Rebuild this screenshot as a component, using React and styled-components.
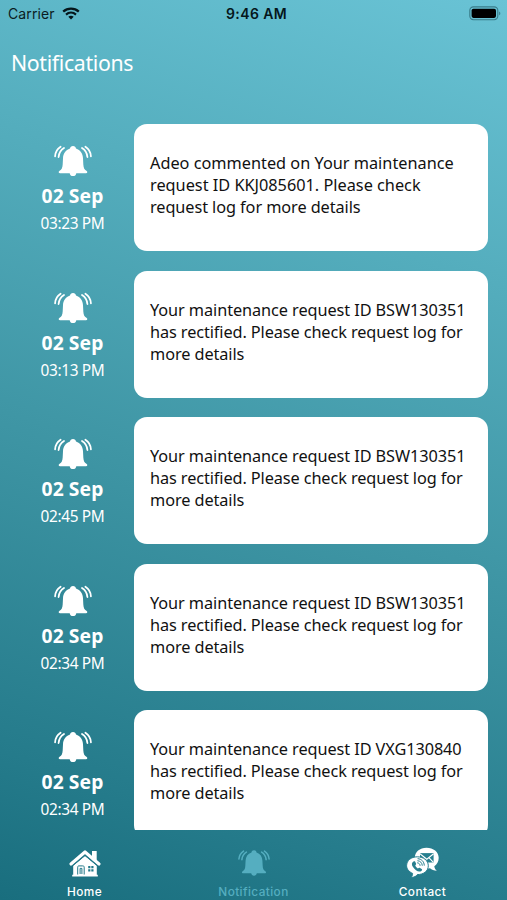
import React from 'react';
import styled, { createGlobalStyle } from 'styled-components';

const GlobalStyle = createGlobalStyle`
  * {
    box-sizing: border-box;
  }

  body {
    margin: 0;
  }
`;

const Screen = styled.div`
  display: flex;
  flex-direction: column;
  width: 507px;
  height: 900px;
  overflow: hidden;
  font-family: 'Noto Sans', 'Open Sans', sans-serif;
  color: #fff;
  background: linear-gradient(
    18deg,
    #196e7e 0%,
    #257b8b 14%,
    #3f96a5 46%,
    #54adbd 73%,
    #69c3d5 100%
  );
`;

const StatusBar = styled.header`
  display: grid;
  grid-template-columns: 1fr auto 1fr;
  align-items: center;
  height: 27px;
  padding: 0 6px 0 8px;
  font-family: Inter, 'Liberation Sans', sans-serif;
  font-size: 14px;
  line-height: 27px;
  color: #0b1c22;
`;

const Carrier = styled.div`
  display: flex;
  align-items: center;
  gap: 7px;
  letter-spacing: 0.1px;
`;

const Clock = styled.div`
  padding-left: 4px;
  font-weight: 600;
  letter-spacing: 0.4px;
  color: #05161b;
`;

const BatterySlot = styled.div`
  display: flex;
  justify-content: flex-end;
`;

const Title = styled.h1`
  height: 97px;
  margin: 0;
  padding: 20px 11px 0;
  font-size: 21.3px;
  font-weight: 400;
  line-height: 32px;
  letter-spacing: -0.35px;
`;

const List = styled.main`
  display: flex;
  flex-direction: column;
  gap: 19.3px;
  height: 706px;
  padding-right: 19.5px;
  overflow: hidden;
`;

const Row = styled.article`
  display: flex;
  flex: none;
  height: 127.3px;
`;

const Stamp = styled.div`
  display: flex;
  flex-direction: column;
  align-items: center;
  width: 134px;
  padding: 21px 0 0 11px;

  svg {
    flex: none;
  }
`;

const Day = styled.div`
  margin-top: 5px;
  font-size: 19.3px;
  font-weight: 700;
  line-height: 28px;
  letter-spacing: 0.1px;
`;

const Time = styled.div`
  margin-top: 1px;
  font-size: 15.4px;
  line-height: 25px;
  letter-spacing: -0.35px;
  white-space: nowrap;
`;

const Card = styled.div`
  flex: 1;
  padding: 28px 0 0 16px;
  border-radius: 13px;
  background: #fff;
  color: #111;
  font-size: 16.3px;
  line-height: 22px;
`;

const Line = styled.div`
  white-space: nowrap;
  letter-spacing: ${props => props.$spacing};
`;

const TabBar = styled.nav`
  display: grid;
  grid-template-columns: repeat(3, 1fr);
  height: 70px;
`;

const Tab = styled.a`
  display: flex;
  flex-direction: column;
  align-items: center;
  padding-top: 16px;
  font-family: Inter, 'Liberation Sans', sans-serif;
  font-size: 11.8px;
  font-weight: 500;
  line-height: 16px;
  letter-spacing: 0.42px;
  color: ${props => (props.$active ? '#55aec0' : '#fff')};

  svg {
    margin-bottom: 4px;
  }
`;

const WifiIcon = () => (
  <svg width="18" height="13" viewBox="0 0 18 13" fill="none" stroke="#05161b">
    <path d="M1.2 4.6C5.6.6 12.4.6 16.8 4.6" strokeWidth="2.3" />
    <path d="M4 7.6c2.9-2.6 7.1-2.6 10 0" strokeWidth="2.1" />
    <path d="M9 12.4 6.3 9.7c1.5-1.3 3.9-1.3 5.4 0Z" fill="#05161b" stroke="none" />
  </svg>
);

const BatteryIcon = () => (
  <svg width="32" height="15" viewBox="0 0 32 15">
    <rect x="0.8" y="0.9" width="28" height="12.8" rx="3.6" fill="none" stroke="#397c89" strokeWidth="1.1" />
    <rect x="2.6" y="2.7" width="24.4" height="9.2" rx="1.8" fill="#000" />
    <path d="M30.2 5.4c1.5.6 1.5 3.2 0 3.8Z" fill="#397c89" />
  </svg>
);

const BellIcon = ({ width = 38, height = 32 }) => (
  <svg width={width} height={height} viewBox="0 0 38 32" fill="none">
    <path
      fill="currentColor"
      d="M19 1c-1.7 0-2.8 1-3 2.500C11.600 5 9.200 8.600 9 13.200l-.3 6.100c-.2 3.600-1 5.300-3.100 6.400-1.400.8-1.200 2.500.5 2.500h9.600c.3 1.900 1.500 2.900 3.300 2.900s3-1 3.300-2.900h9.600c1.700 0 1.900-1.700.5-2.500-2.100-1.100-2.900-2.800-3.100-6.400l-.3-6.100C28.800 8.600 26.400 5 22 3.500 21.800 2 20.700 1 19 1Z"
    />
    <g stroke="currentColor" strokeWidth="1.8" strokeLinecap="round">
      <path d="M6.600 1.800C3.200 4 1.300 7.300 1.100 11.300" />
      <path d="M10 3C6.800 5 4.900 8 4.600 12" />
      <path d="M31.400 1.800c3.400 2.200 5.300 5.500 5.500 9.500" />
      <path d="M28 3c3.200 2 5.100 5 5.400 9" />
    </g>
  </svg>
);

const HomeIcon = () => (
  <svg width="34" height="34" viewBox="0 0 34 34" fill="none">
    <path fill="#fff" d="M24 5h4.700v10L24 10.800Z" />
    <path stroke="#fff" strokeWidth="3.2" strokeLinejoin="round" strokeLinecap="round" d="M3 18 17 6l14 12" />
    <path fill="#fff" d="M5.200 19.800 17 9.900l11.800 9.900v8.900h1v1.700H4.200v-1.700h1Z" />
    <path stroke="#237989" strokeWidth="1" d="m5 19.400 12-10 12 10" />
    <path
      stroke="#237989"
      strokeWidth="1"
      d="M9.700 28.500v-7.300c0-1 .4-1.300 1.300-1.300h3.700c1 0 1.500.4 1.500 1.300v7.300M12.100 28v-5.600h1.800V28"
    />
    <path fill="#237989" d="M20.200 20.100h2.200v2.200h-2.200zM23.300 20.100h2.200v2.200h-2.200zM20.200 23.200h2.200v2.200h-2.200zM23.300 23.200h2.200v2.200h-2.200z" />
  </svg>
);

const ContactIcon = () => (
  <svg width="34" height="34" viewBox="0 0 34 34" fill="none">
    <path
      fill="#fff"
      d="M20.500 1.700c6.900 0 12.200 4.200 12.200 10 0 3.800-1.800 6.700-4.400 8.500.3 2.100 1.200 3.600 2.700 4.500-3.100 0-5.300-.8-7-2.400-8 1.600-15.200-3.300-15.200-10.600 0-5.800 5-10 11.700-10Z"
    />
    <path fill="#277f8f" d="M14 7.100h13.600v9.400H14Z" />
    <path stroke="#fff" strokeWidth="1.1" d="m14 7.800 6.800 5.400 6.800-5.400M14.200 16.400l4.500-4.700M27.400 16.400l-4.500-4.700" />
    <path
      fill="#fff"
      stroke="#277f8f"
      strokeWidth="1"
      d="M11.300 10.800c6.200 0 11 3.700 11 9s-4.800 8.800-11 8.800c-.6 1.500-3.300 2.900-6.500 2.900 1.300-1 1.900-2.500 1.800-4.100C3 25.700.6 23.100.6 19.800c0-5.300 4.500-9 10.700-9Z"
    />
    <path
      fill="#277f8f"
      d="M7.500 15.400c-1.900 1-2.100 3.200-.5 5.700 2 3.200 5 5 7.500 4.300 1.300-.4 1.800-1.500 1.500-2.100l-2.300-1.500c-.7-.3-1.300.7-1.900.6-1.100-.4-2.300-1.900-2.500-2.800 0-.7 1-1.200.8-1.900l-1-2.100c-.3-.5-.9-.5-1.600-.2Z"
    />
    <g stroke="#277f8f" strokeWidth="1">
      <path d="M11.200 16.800c1.700.1 2.800 1.300 2.900 3" />
      <path d="M11.400 14.700c2.900.2 4.700 2.100 4.900 5" />
      <path d="M11.600 12.700c3.900.2 6.500 2.800 6.700 6.900" />
    </g>
  </svg>
);

const rectified = id => [
  { text: `Your maintenance request ID ${id}`, spacing: '-0.08px' },
  { text: 'has rectified. Please check request log for', spacing: '-0.1px' },
  { text: 'more details', spacing: '-0.08px' },
];

const notifications = [
  {
    time: '03:23 PM',
    lines: [
      { text: 'Adeo commented on Your maintenance', spacing: '0px' },
      { text: 'request ID KKJ085601. Please check', spacing: '0px' },
      { text: 'request log for more details', spacing: '-0.08px' },
    ],
  },
  { time: '03:13 PM', lines: rectified('BSW130351') },
  { time: '02:45 PM', lines: rectified('BSW130351') },
  { time: '02:34 PM', lines: rectified('BSW130351') },
  { time: '02:34 PM', lines: rectified('VXG130840') },
];

const App = () => (
  <>
    <GlobalStyle />
    <Screen>
      <StatusBar>
        <Carrier>
          Carrier
          <WifiIcon />
        </Carrier>
        <Clock>9:46 AM</Clock>
        <BatterySlot>
          <BatteryIcon />
        </BatterySlot>
      </StatusBar>
      <Title>Notifications</Title>
      <List>
        {notifications.map((item, index) => (
          <Row key={index}>
            <Stamp>
              <BellIcon />
              <Day>02 Sep</Day>
              <Time>{item.time}</Time>
            </Stamp>
            <Card>
              {item.lines.map(line => (
                <Line key={line.text} $spacing={line.spacing}>
                  {line.text}
                </Line>
              ))}
            </Card>
          </Row>
        ))}
      </List>
      <TabBar>
        <Tab>
          <HomeIcon />
          Home
        </Tab>
        <Tab $active>
          <BellIcon width={32} height={34} />
          Notification
        </Tab>
        <Tab>
          <ContactIcon />
          Contact
        </Tab>
      </TabBar>
    </Screen>
  </>
);

export default App;
